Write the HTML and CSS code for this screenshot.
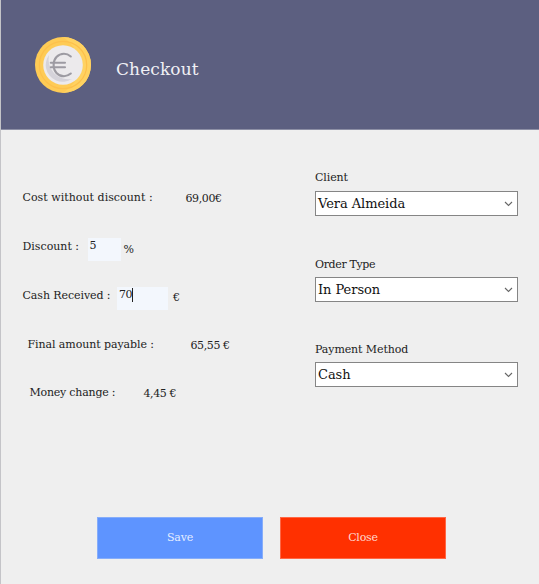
FILE: index.html
```html
<!DOCTYPE html>
<html lang="en">
<head>
<meta charset="utf-8">
<title>Checkout</title>
<link rel="stylesheet" href="styles.css">
</head>
<body>
<header class="header">
  <svg class="coin" viewBox="0 0 56 56" aria-hidden="true">
    <circle cx="28" cy="28" r="28" fill="#fecb55"/>
    <path d="M28 0a28 28 0 0 1 0 56a40 40 0 0 0 17-24a38 38 0 0 0-17-32z" fill="#ffd261"/>
    <circle cx="28" cy="28" r="23.7" fill="none" stroke="#fdc04b" stroke-width="1.2"/>
    <circle cx="28" cy="28" r="19.8" fill="#eceaec"/>
    <path d="M14 18a20 20 0 0 0 23 24a17 17 0 0 1-26-11a18 18 0 0 1 3-13z" fill="#d5d3da"/>
    <path d="M35.800 19.500C33.800 17.800 31.600 16.800 29 16.800C22.800 16.800 18.600 21.800 18.600 28S22.800 39.200 29 39.200C31.600 39.200 33.800 38.200 35.800 36.500M15.800 25.800H30M15.800 30.200H30" fill="none" stroke="#9d9ba2" stroke-width="2.100" stroke-linecap="round"/>
  </svg>
  <h1 class="title">Checkout</h1>
</header>
<main class="content">
  <section class="summary">
    <div class="row"><span class="label cost">Cost without discount :</span><span class="value">69,00€</span></div>
    <div class="row"><span class="label discount">Discount :</span><span class="input percent-input">5</span><span class="unit percent">%</span></div>
    <div class="row"><span class="label received">Cash Received :</span><span class="input cash-input">70<i class="caret"></i></span><span class="unit euro">€</span></div>
    <div class="row final"><span class="label payable">Final amount payable :</span><span class="value">65,55 €</span></div>
    <div class="row change"><span class="label money">Money change :</span><span class="value">4,45 €</span></div>
  </section>
  <section class="options">
    <div class="field client"><span class="caption">Client</span><div class="select"><span>Vera Almeida</span><svg class="chevron" viewBox="0 0 9 6"><path d="M1 1l3.500 3.500L8 1"/></svg></div></div>
    <div class="field order"><span class="caption">Order Type</span><div class="select"><span>In Person</span><svg class="chevron" viewBox="0 0 9 6"><path d="M1 1l3.500 3.500L8 1"/></svg></div></div>
    <div class="field payment"><span class="caption">Payment Method</span><div class="select"><span>Cash</span><svg class="chevron" viewBox="0 0 9 6"><path d="M1 1l3.500 3.500L8 1"/></svg></div></div>
  </section>
</main>
<footer class="actions"><button class="button save">Save</button><button class="button close">Close</button></footer>
</body>
</html>
```
FILE: styles.css
```css
* { box-sizing: border-box; }
body {
  margin: 0;
  width: 539px;
  height: 584px;
  overflow: hidden;
  display: flex;
  flex-direction: column;
  background: #efefef;
  border-left: 1px solid #c4c4c8;
  color: #222;
  font: 11px/16px "DejaVu Serif", serif;
}
.header {
  height: 130px;
  margin-left: -1px;
  padding: 37px 0 0 35px;
  display: flex;
  align-items: flex-start;
  background: #5c5f80;
  border-left: 1px solid #6d7088;
  border-bottom: 1px solid #8d8fa5;
}
.coin { width: 56px; height: 56px; margin-left: -1px; }
.title { margin: 20px 0 0 25px; font-size: 17px; line-height: 24px; font-weight: 400; letter-spacing: 0.1px; color: #f0f0f5; }
.content { height: 387px; display: flex; }
.summary { width: 314px; padding: 44px 0 0 21.5px; }
.row { height: 48.75px; display: flex; align-items: center; white-space: nowrap; }
.label { flex: none; }
.cost { width: 163px; letter-spacing: 0.03px; }
.discount { width: 65px; letter-spacing: 0; }
.received { width: 94.500px; letter-spacing: -0.08px; }
.payable { width: 163px; letter-spacing: -0.08px; }
.money { width: 114px; letter-spacing: -0.22px; }
.final { padding-left: 5px; }
.change { padding-left: 7px; }
.value { letter-spacing: -0.4px; padding-top: 2px; }
.input { height: 23px; padding: 0 2px; background: #f3f7fd; margin-top: 5px; letter-spacing: -0.5px; }
.percent-input { width: 33px; }
.cash-input { width: 51px; display: flex; }
.caret { width: 1px; height: 14px; margin-top: 1px; background: #222; }
.unit { padding-top: 5px; }
.percent { margin-left: 3px; }
.euro { margin-left: 5px; }
.options { width: 203px; padding-top: 40px; }
.field { height: 86px; }
.client { height: 87px; }
.order { height: 85px; }
.caption { display: block; letter-spacing: -0.1px; }
.order .caption { letter-spacing: -0.35px; }
.select {
  width: 203px;
  height: 25px;
  margin-top: 4px;
  padding: 0 4px 0 2px;
  display: flex;
  align-items: center;
  justify-content: space-between;
  background: #fff;
  border: 1px solid #858585;
  font-size: 13px;
  letter-spacing: -0.05px;
  color: #111;
}
.client .select { margin-top: 5px; }
.chevron { width: 9px; height: 6px; fill: none; stroke: #666; stroke-width: 1.1; }
.actions { display: flex; gap: 17px; padding-left: 96px; }
.button { width: 166px; height: 42px; padding: 0; font: inherit; letter-spacing: -0.2px; color: #e4edff; }
.save { background: #5e94ff; border: 1px solid #86adfa; }
.close { background: #ff3000; border: 1px solid #ff6745; color: #ffd9d0; }
```
